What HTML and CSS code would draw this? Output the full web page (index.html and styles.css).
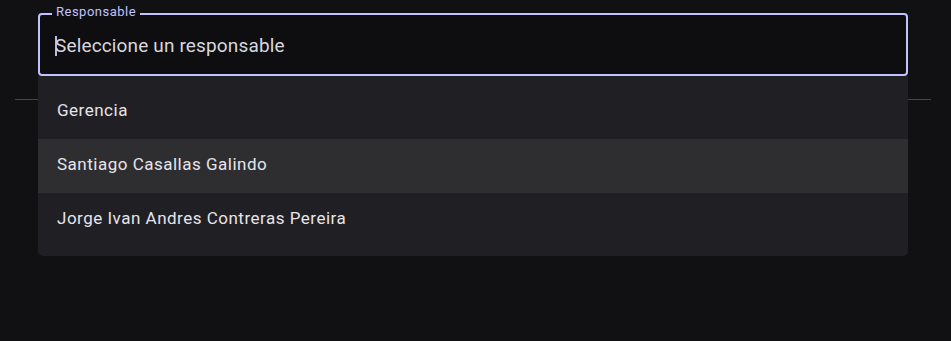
FILE: index.html
```html
<!DOCTYPE html>
<html lang="es">
<head>
<meta charset="utf-8">
<title>Responsable</title>
<link rel="stylesheet" href="styles.css">
</head>
<body>
<div class="page">
  <div class="field-wrap">
    <fieldset class="field">
      <legend class="label">Responsable</legend>
      <div class="control"><span class="caret"></span><span class="placeholder">Seleccione un responsable</span></div>
    </fieldset>
    <ul class="menu">
      <li class="option">Gerencia</li>
      <li class="option hover">Santiago Casallas Galindo</li>
      <li class="option">Jorge Ivan Andres Contreras Pereira</li>
    </ul>
  </div>
  <div class="divider"></div>
</div>
</body>
</html>
```
FILE: styles.css
```css
html, body {
  margin: 0;
  padding: 0;
  background: #111113;
  font-family: Roboto, "Liberation Sans", sans-serif;
  height: 100%;
}
.page {
  padding: 5px 20px 0 15px;
}
.field-wrap {
  position: relative;
  margin: 0 23px;
}
.field {
  margin: 0;
  padding: 0 0 0 15px;
  border: 2px solid #c3c2ff;
  border-radius: 4px;
  background: #0e0e10;
  height: 71px;
  box-sizing: border-box;
}
.label {
  margin-left: -3px;
  padding: 0 4px 4px;
  font-size: 13px;
  line-height: 14px;
  letter-spacing: 0.5px;
  color: #c0c1ff;
}
.control {
  display: flex;
  align-items: center;
  height: 45px;
  padding-bottom: 6px;
  box-sizing: border-box;
  height: 51px;
}
.caret {
  display: inline-block;
  width: 2px;
  height: 20px;
  background: #b9b8f5;
  margin-right: -2px;
}
.placeholder {
  font-size: 19px;
  color: #d8d7df;
  letter-spacing: 0.15px;
}
.menu {
  position: absolute;
  top: 100%;
  left: 0;
  right: 0;
  margin: 0;
  padding: 9px 0;
  list-style: none;
  background: #201f24;
  border-radius: 0 0 5px 5px;
}
.option {
  height: 54px;
  box-sizing: border-box;
  display: flex;
  align-items: center;
  padding: 0 0 4px 19px;
  font-size: 17px;
  color: #e6e4ea;
  letter-spacing: 0.5px;
}
.option.hover {
  background: #2e2e31;
}
.divider {
  margin-top: 23px;
  height: 1px;
  background: #444449;
}
```
